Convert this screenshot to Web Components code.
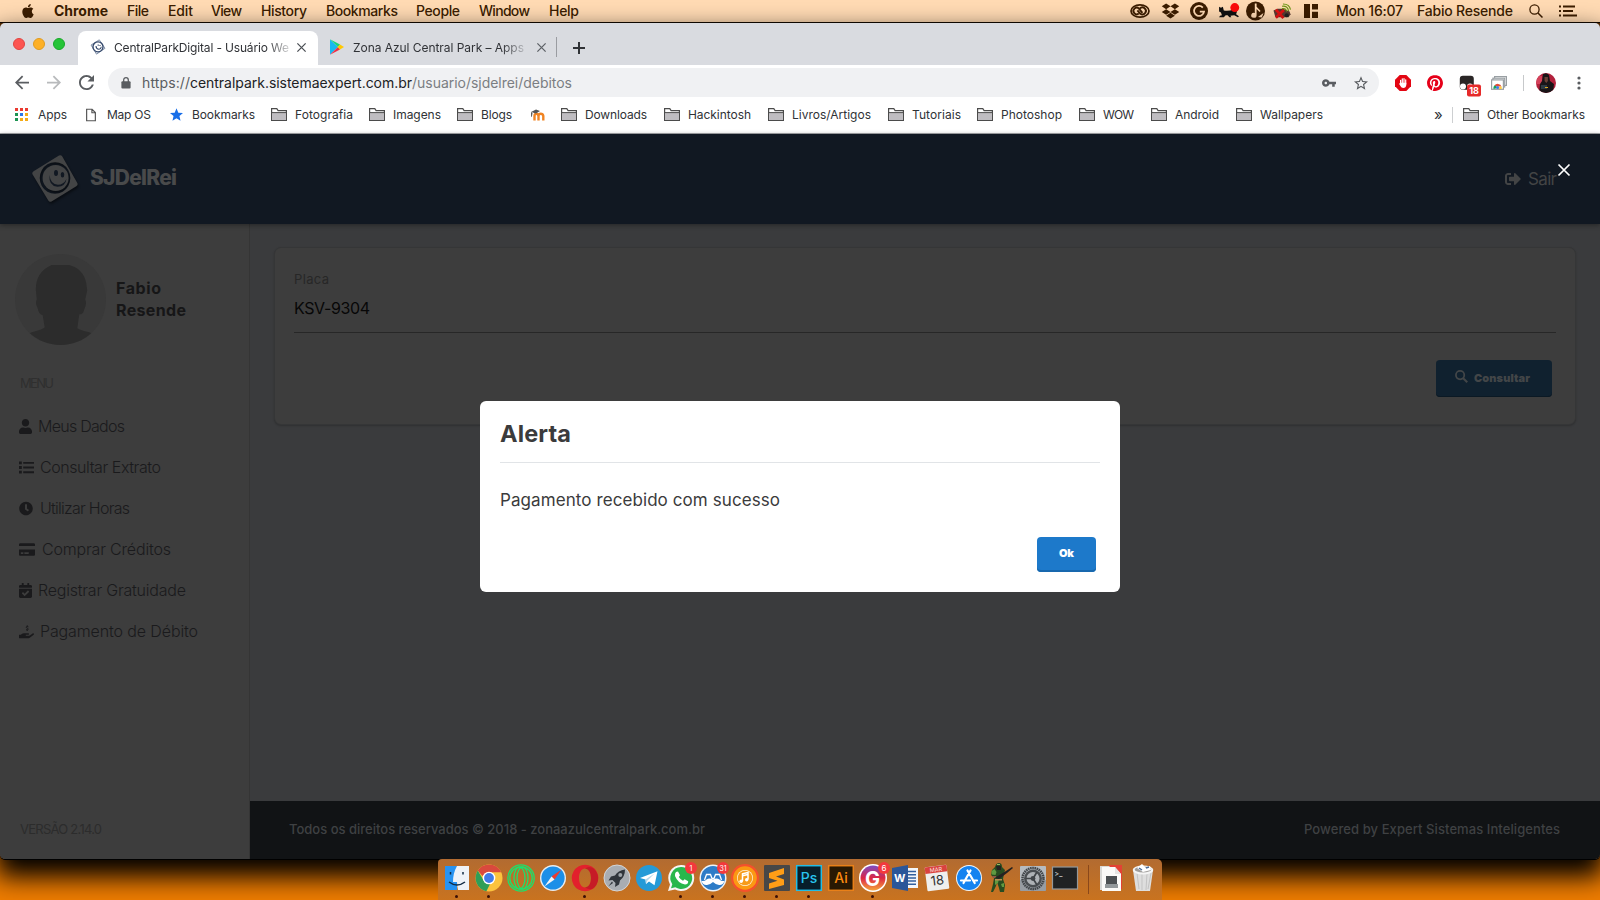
<!DOCTYPE html>
<html lang="pt-BR">
<head>
<meta charset="utf-8">
<title>CentralParkDigital - Usuário Web</title>
<style>
html,body{margin:0;height:100%;overflow:hidden}
body{font-family:Inter,"Liberation Sans",sans-serif;background:#e87800}
</style>
</head>
<body>
<mac-desktop></mac-desktop>
<script>
const ICONS = {
  apple:['0 0 24 24','<path d="M12.152 6.896c-.948 0-2.415-1.078-3.96-1.04-2.04.027-3.91 1.183-4.961 3.014-2.117 3.675-.546 9.103 1.519 12.09 1.013 1.454 2.208 3.09 3.792 3.039 1.52-.065 2.09-.987 3.935-.987 1.831 0 2.35.987 3.96.948 1.637-.026 2.676-1.48 3.676-2.948 1.156-1.688 1.636-3.325 1.662-3.415-.039-.013-3.182-1.221-3.22-4.857-.026-3.04 2.48-4.494 2.597-4.559-1.429-2.09-3.623-2.324-4.39-2.376-2-.156-3.675 1.09-4.61 1.09zM15.53 3.83c.843-1.012 1.4-2.427 1.245-3.83-1.207.052-2.662.805-3.532 1.818-.78.896-1.454 2.338-1.273 3.714 1.338.104 2.715-.688 3.559-1.701"/>'],
  cc:['0 0 20 14','<g fill="none" stroke="currentColor"><ellipse cx="10" cy="7" rx="9" ry="6.200" stroke-width="1.700"/><path d="M8.800 9.600A3.300 3.300 0 1 1 9 4.600l3.400 4.200" stroke-width="1.900"/><path d="M7.400 6.400l3 3.400a3.500 3.500 0 1 0-.6-5.300" stroke-width="1.900"/></g>'],
  dropbox:['0 1 24 22','<path d="M6 1.807L0 5.629l6 3.822 6.001-3.822L6 1.807zM18 1.807l-6 3.822 6 3.822 6-3.822-6-3.822zM0 13.274l6 3.822 6.001-3.822L6 9.452l-6 3.822zM18 9.452l-6 3.822 6 3.822 6-3.822-6-3.822zM6 18.371l6.001 3.822 6-3.822-6-3.822L6 18.371z"/>'],
  gcircle:['0 0 18 18','<circle cx="9" cy="9" r="9"/><path d="M12.800 5.600A5 5 0 1 0 14 9.600H9.800" fill="none" stroke="#ffdab3" stroke-width="1.800"/>'],
  cat:['0 0 23 18','<path fill="#111" d="M1 4l2 1 2-1 1 4q5 1 10-1l4 2-1 3 3 2-1 1-4-2-4 .5 1 1.500h-2l-2-2H8l-2 2H1l1-1.500 2-.5-1-3-2-1z"/><circle cx="17.600" cy="4.800" r="4.700" fill="#fb0a0a"/>'],
  music:['0 0 19 20','<circle cx="9.500" cy="10" r="9.500"/><path fill="#ffdab3" d="M8.800 2.500h1.800v3.200l4 4.300-1.100 1-2.900-3v6.300a2.700 2.500 0 1 1-1.800-2.300zM12 16l5.500-4-1.700 4.500z"/>'],
  car:['0 0 20 18','<path d="M1 8l4-2h6l7 3 1 3-2 3H3z" fill="#5b3b32"/><circle cx="15" cy="13" r="2.200" fill="#222"/><path d="M10 6q4-1 5 3M10 3.500q6-1 7 5M11 1q7 0 8 6" stroke="#6a9612" stroke-width="1.200" fill="none"/><path d="M3.500 7l8 9M12 7.500l-8.500 8" stroke="#e21313" stroke-width="3"/>'],
  panes:['0 0 14 14','<path d="M0 0h6v14H0zM8 0h6v5.500H8zM8 7.700h6V14H8z"/>'],
  search:['0 0 14 14','<circle cx="5.500" cy="5.500" r="4.600" fill="none" stroke="currentColor" stroke-width="1.300"/><path d="M9 9l4.500 4.500" stroke="currentColor" stroke-width="1.500"/>'],
  menulist:['0 0 18 12','<path d="M0 .5h2v2H0zM0 5h2v2H0zM0 9.500h2v2H0zM4 .5h12v2H4zM4 5h10v2H4zM4 9.500h14v2H4z"/>'],
  favicon:['0 0 16 16','<path d="M9.300.8L15 9.300 6.500 15.200 1 6z" fill="#dfe4ec" stroke="#6f7f99" stroke-width=".8"/><circle cx="8" cy="7.800" r="5" fill="#fff" stroke="#34486b" stroke-width="1.300"/><path d="M6 7q.3 3.500 3 3.300 2-.3 2.300-2.600M8.200 5.500v1.300M10 6v1" fill="none" stroke="#34486b" stroke-width="1.100"/>'],
  logo:['0 0 46 47','<path fill-rule="evenodd" d="M27 .5q2-1 3.300 1L45.300 28q1 2-1 3.200L19.500 46.500q-2 1-3.200-1L.6 19.500q-1-2 1-3.200zM23 7.200a15.300 15.800 0 1 0 .1 0z"/><circle cx="23.600" cy="23" r="13"/><g class="cut"><ellipse cx="24" cy="18" rx="2" ry="3"/><ellipse cx="30.500" cy="19.700" rx="1.800" ry="2.700"/><path d="M17.500 20q1 9.500 8.500 9.800 5.500 0 8.500-5.800-1 7.500-9 7.800Q16.500 31 17.500 20z"/></g>'],
  x:['0 0 12 12','<path d="M.5.500l11 11M11.500.500l-11 11" stroke="currentColor" stroke-width="1.700" fill="none"/>'],
  plus:['0 0 12 12','<path d="M6 0v12M0 6h12" stroke="currentColor" stroke-width="2"/>'],
  play:['0 0 14 16','<path d="M0 .5v15L8 8z" fill="#18b9ef"/><path d="M0 .3l10 5.200L8 8z" fill="#18d47d"/><path d="M0 15.700l10-5.200L8 8z" fill="#ef3047"/><path d="M10 5.400l4 2.600-4 2.600L7.500 8z" fill="#ffc800"/>'],
  back:['4 4 16 16','<path d="M20 11H7.830l5.590-5.590L12 4l-8 8 8 8 1.410-1.410L7.830 13H20v-2z"/>'],
  fwd:['4 4 16 16','<path d="M12 4l-1.410 1.410L16.170 11H4v2h12.170l-5.580 5.590L12 20l8-8z"/>'],
  reload:['4 4 16 16','<path d="M17.650 6.350C16.200 4.900 14.210 4 12 4c-4.420 0-7.990 3.580-7.990 8s3.570 8 7.990 8c3.730 0 6.840-2.550 7.730-6h-2.080c-.82 2.330-3.040 4-5.650 4-3.310 0-6-2.690-6-6s2.690-6 6-6c1.660 0 3.140.69 4.220 1.780L13 11h7V4l-2.350 2.350z"/>'],
  lock:['0 0 10 13','<rect y="4.500" width="10" height="8" rx="1.200"/><path d="M2.500 6V3.200a2.500 2.500 0 0 1 5 0V6" fill="none" stroke="currentColor" stroke-width="1.400"/>'],
  key:['1 6 22 12','<path d="M12.650 10C11.830 7.670 9.610 6 7 6c-3.310 0-6 2.690-6 6s2.690 6 6 6c2.610 0 4.830-1.670 5.650-4H17v4h4v-4h2v-4H12.650zM7 14c-1.100 0-2-.9-2-2s.9-2 2-2 2 .9 2 2-.9 2-2 2z"/>'],
  staro:['2 2 20 19','<path d="M22 9.240l-7.190-.62L12 2 9.190 8.630 2 9.240l5.460 4.730L5.820 21 12 17.270 18.180 21l-1.630-7.030L22 9.240zM12 15.400l-3.760 2.270 1-4.280-3.320-2.880 4.380-.38L12 6.100l1.710 4.040 4.380.38-3.320 2.880 1 4.280L12 15.400z"/>'],
  star:['2 2 20 19','<path fill="#1a6fe8" d="M12 17.270L18.180 21l-1.640-7.030L22 9.240l-7.190-.61L12 2 9.190 8.630 2 9.240l5.460 4.730L5.820 21z"/>'],
  stop:['0 0 16 16','<path fill="#e30613" d="M4.700 0h6.600L16 4.700v6.600L11.300 16H4.700L0 11.300V4.700z"/><path d="M5.600 9V5.300M7.300 8V3.800M9 8V3.600M10.700 9V4.800" stroke="#fff" stroke-width="1.200" stroke-linecap="round"/><path fill="#fff" d="M5 7.800h6.300V10q-.3 3-3 3-2 0-2.700-1.800L4 8.800q.4-.8 1-.2z"/>'],
  pin:['0 0 24 24','<circle cx="12" cy="12" r="11" fill="#fff"/><path fill="#e60019" d="M12.017 0C5.396 0 .029 5.367.029 11.987c0 5.079 3.158 9.417 7.618 11.162-.105-.949-.199-2.403.041-3.439.219-.937 1.406-5.957 1.406-5.957s-.359-.72-.359-1.781c0-1.663.967-2.911 2.168-2.911 1.024 0 1.518.769 1.518 1.688 0 1.029-.653 2.567-.992 3.992-.285 1.193.6 2.165 1.775 2.165 2.128 0 3.768-2.245 3.768-5.487 0-2.861-2.063-4.869-5.008-4.869-3.410 0-5.409 2.562-5.409 5.199 0 1.033.394 2.143.889 2.741.099.12.112.225.085.345-.09.375-.293 1.199-.334 1.363-.053.225-.172.271-.401.165-1.495-.69-2.433-2.878-2.433-4.646 0-3.776 2.748-7.252 7.920-7.252 4.158 0 7.392 2.967 7.392 6.923 0 4.135-2.607 7.462-6.233 7.462-1.214 0-2.354-.629-2.758-1.379l-.749 2.848c-.269 1.045-1.004 2.352-1.498 3.146 1.123.345 2.306.535 3.550.535 6.607 0 11.985-5.365 11.985-11.987C23.970 5.390 18.592.026 11.985.026z"/>'],
  tamper:['0 0 22 22','<rect x=".8" y=".8" width="14" height="14" rx="3" fill="#2a2626"/><circle cx="4" cy="11.500" r="3" fill="#fff"/><circle cx="11" cy="11.500" r="3" fill="#fff"/><rect x="8" y="9.600" width="14" height="12" rx="2" fill="#e62a2a"/><text x="15" y="19" font-size="9" font-weight="700" fill="#fff" text-anchor="middle">18</text>'],
  shots:['0 0 16 14','<g fill="#fff" stroke="#999fa3" stroke-width="1.200"><rect x="3.600" y=".6" width="11.800" height="8.800"/><rect x="1.900" y="2.200" width="11.800" height="8.800"/><rect x=".6" y="3.900" width="11.800" height="9.400"/></g><path d="M2.500 13a4 4 0 0 1 2-4.300L6.500 12z" fill="#17a05d"/><path d="M3.500 9.500a4 4 0 0 1 7 1H6.500z" fill="#e34b37"/><path d="M9 10.500h1.700V13H7z" fill="#ffcd40"/><circle cx="6.600" cy="11.600" r="1.500" fill="#3d7cf0"/>'],
  face:['0 0 20 20','<defs><clipPath id="f"><circle cx="10" cy="10" r="10"/></clipPath></defs><g clip-path="url(#f)"><path fill="#b2213c" d="M0 0h20v20H0z"/><path fill="#d4415a" d="M0 3h6v8H0z"/><path fill="#191417" d="M7 1q4-2 6 1l1 6 4 3-1 9H3l1-9 2-3z"/><path fill="#6b4137" d="M8.500 4h3.400v4l-1.600 2-1.700-2z"/><path fill="#2c3942" d="M5 12h6v4H5z"/><path fill="#d9a722" d="M9 14h3v1H9z"/></g>'],
  dots:['0 0 4 14','<circle cx="2" cy="2" r="1.600"/><circle cx="2" cy="7" r="1.600"/><circle cx="2" cy="12" r="1.600"/>'],
  apps:['0 0 13 13','<g fill="#ea3a30"><path d="M0 0h3v3H0zM5 0h3v3H5zM10 0h3v3h-3z"/></g><path fill="#1d9453" d="M0 5h3v3H0zM0 10h3v3H0z"/><path fill="#2a77e8" d="M5 5h3v3H5z"/><path fill="#f4ab16" d="M10 5h3v3h-3zM10 10h3v3h-3zM5 10h3v3H5z"/>'],
  doc:['0 0 11 14','<path d="M.7.7h6l3.600 3.600v9H.7zM6.500.7v3.800h3.800" fill="#fff" stroke="#555" stroke-width="1.300"/>'],
  folder:['0 0 16 13','<path d="M.6 12.300V.7h5.200l1.300 2h8.300v9.600z" fill="#fff" stroke="#4b4b4b" stroke-width="1.200"/><path d="M1 5h14v7H1z" fill="#bfbdc1"/><path d="M1 4.600h14" stroke="#4b4b4b"/>'],
  moodle:['0 0 15 12','<path d="M4.500 11.500V7q0-2.200 1.800-2.200T8.500 7v4.500M8.500 7q0-2.200 2.200-2.200T13.300 7v4.500" fill="none" stroke="#f08423" stroke-width="2.400"/><path fill="#555" d="M1 3l5-2.500L10 2 6 4.500zM1 3l1.500 1.200-.7 4-.7-1z"/>'],
  user:['0 0 448 512','<path d="M224 256c70.700 0 128-57.300 128-128S294.700 0 224 0 96 57.300 96 128s57.300 128 128 128zm89.600 32h-16.700c-22.200 10.200-46.900 16-72.900 16s-50.600-5.800-72.900-16h-16.700C60.200 288 0 348.200 0 422.400V464c0 26.500 21.500 48 48 48h352c26.500 0 48-21.500 48-48v-41.600c0-74.200-60.200-134.400-134.400-134.400z"/>'],
  list:['0 0 16 14','<path d="M0 .5h3v3H0zM0 5.500h3v3H0zM0 10.500h3v3H0zM4.500 1h11.500v2H4.500zM4.500 6h11.500v2H4.500zM4.500 11h11.500v2H4.500z"/>'],
  clock:['0 0 512 512','<path d="M256 8C119 8 8 119 8 256s111 248 248 248 248-111 248-248S393 8 256 8zm57.100 350.100L224.900 294c-3.100-2.300-4.900-5.900-4.900-9.700V116c0-6.600 5.400-12 12-12h48c6.600 0 12 5.400 12 12v137.700l63.500 46.200c5.400 3.900 6.500 11.400 2.600 16.800l-28.200 38.800c-3.900 5.300-11.400 6.500-16.800 2.600z"/>'],
  card:['0 0 576 512','<path d="M0 432c0 26.500 21.500 48 48 48h480c26.500 0 48-21.500 48-48V256H0v176zm192-68c0-6.600 5.400-12 12-12h136c6.600 0 12 5.400 12 12v40c0 6.600-5.400 12-12 12H204c-6.600 0-12-5.400-12-12v-40zm-128 0c0-6.600 5.400-12 12-12h72c6.600 0 12 5.400 12 12v40c0 6.600-5.400 12-12 12H76c-6.600 0-12-5.400-12-12v-40zM576 80v48H0V80c0-26.500 21.500-48 48-48h480c26.500 0 48 21.500 48 48z"/>'],
  cal:['0 0 448 512','<path d="M436 160H12c-6.627 0-12-5.373-12-12v-36c0-26.510 21.490-48 48-48h48V12c0-6.627 5.373-12 12-12h40c6.627 0 12 5.373 12 12v52h128V12c0-6.627 5.373-12 12-12h40c6.627 0 12 5.373 12 12v52h48c26.510 0 48 21.490 48 48v36c0 6.627-5.373 12-12 12zM12 192h424c6.627 0 12 5.373 12 12v260c0 26.510-21.490 48-48 48H48c-26.510 0-48-21.490-48-48V204c0-6.627 5.373-12 12-12zm333.296 95.947l-28.169-28.398c-4.667-4.705-12.265-4.736-16.970-.068L194.120 364.665l-45.980-46.352c-4.667-4.705-12.266-4.736-16.971-.068l-28.397 28.170c-4.705 4.667-4.736 12.265-.068 16.970l82.601 83.269c4.667 4.705 12.265 4.736 16.970.068l142.953-141.805c4.705-4.667 4.736-12.265.068-16.970z"/>'],
  hand:['0 0 576 512','<path d="M565.300 328.100c-11.800-10.700-30.200-10-42.600 0L430.300 402c-11.300 9.100-25.400 14-40 14H272c-8.800 0-16-7.200-16-16s7.200-16 16-16h78.300c15.900 0 30.700-10.900 33.300-26.600 3.300-20-12.100-37.400-31.600-37.400H192c-27 0-53.100 9.300-74.100 26.300L71.400 384H16c-8.800 0-16 7.200-16 16v96c0 8.800 7.200 16 16 16h356.800c14.500 0 28.600-4.900 40-14L564 377c15.200-12.100 16.400-35.300 1.300-48.900z"/><path d="M362 75q-25-18-55-13t-28 35q0 22 38 30t40 34q0 30-30 33t-58-16M316 20v45m0 125v45" fill="none" stroke="currentColor" stroke-width="38"/>'],
  out:['0 0 512 512','<path d="M497 273L329 441c-15 15-41 4.500-41-17v-96H152c-13.300 0-24-10.700-24-24v-96c0-13.300 10.700-24 24-24h136V88c0-21.400 25.900-32 41-17l168 168c9.300 9.400 9.300 24.600 0 34zM192 436v-40c0-6.600-5.400-12-12-12H96c-17.700 0-32-14.300-32-32V160c0-17.700 14.300-32 32-32h84c6.600 0 12-5.400 12-12V76c0-6.600-5.400-12-12-12H96c-53 0-96 43-96 96v192c0 53 43 96 96 96h84c6.600 0 12-5.400 12-12z"/>'],
  mag:['0 0 14 14','<circle cx="5.500" cy="5.500" r="4.500" fill="none" stroke="currentColor" stroke-width="1.900"/><path d="M8.800 8.800l4.400 4.400" stroke="currentColor" stroke-width="2.200"/>'],
  person:['0 0 92 92','<defs><clipPath id="p"><circle cx="46" cy="46" r="46"/></clipPath></defs><g clip-path="url(#p)"><path fill="#393939" d="M0 0h92v92H0z"/><path fill="#2c2c2c" d="M37 11h18q14 4 17 18l1 8-2 9q2 4-1 10-1 5-5 5l-2 14q3 2 12 4l12 5v10H5V84l12-5q12-3 13-5l-2-12q-4-1-5-7-3-5-1-9l-1-10q0-18 16-25z"/></g>'],
  finder:['0 0 28 28','<path fill="#2793f2" d="M2 2h12v24H2z"/><path fill="#eef2f8" d="M14 2h12v24H15q-1-4-1-8h-4q0-9 4-16z"/><path d="M7.500 8v2.500M20 8v2.500M6 18q8 6 16 0" stroke="#132b43" stroke-width="1.500" fill="none"/>'],
  chrome:['0 0 28 28','<circle cx="14" cy="14" r="13.500" fill="#fbc33d"/><path fill="#d9493d" d="M14 .5A13.500 13.500 0 0 1 26.200 8.300H14L7.500 12 2.700 6.600A13.500 13.500 0 0 1 14 .5z"/><path fill="#2f9e58" d="M2.700 6.600L9 17l6 3-3.600 7.200A13.500 13.500 0 0 1 2.700 6.600z"/><circle cx="14" cy="14" r="6.300" fill="#fff"/><circle cx="14" cy="14" r="4.900" fill="#3f7be9"/>'],
  rings:['0 0 28 28','<g fill="none" stroke="#1ee06b" stroke-width="1.300"><circle cx="14" cy="14" r="13.200"/><circle cx="14" cy="14" r="11.200"/><ellipse cx="12.500" cy="14" rx="5.500" ry="11"/><ellipse cx="15.500" cy="14" rx="5.500" ry="11"/></g>'],
  safari:['0 0 28 28','<circle cx="14" cy="14" r="13" fill="#e8edf1"/><circle cx="14" cy="14" r="11.600" fill="#1c8fe8"/><path d="M22.500 5.500L12.500 12.500l3 3z" fill="#ee3b30"/><path d="M5.500 22.500l7-10 3 3z" fill="#f3f4f5"/>'],
  opera:['0 0 28 28','<path fill="#e2202c" fill-rule="evenodd" d="M14 .7a13.300 13.300 0 1 0 .1 0zM14 4.500c3.500 0 6 4 6 9.500s-2.500 9.500-6 9.500S8 19.500 8 14s2.500-9.500 6-9.500z"/><path fill="#9e151d" d="M14 23.500q6-1 6-9.500T14 4.500q4-3 8.500 0Q28 9 27 17q-4 12-13 6.500z" opacity=".4"/>'],
  rocket:['0 0 28 28','<circle cx="14" cy="14" r="13" fill="#a9adb2"/><circle cx="14" cy="14" r="13" fill="none" stroke="#d4d6d8"/><path fill="#30353b" d="M22 5.500q-7 1-10 6l-4 1-2.500 4 4-.5 3 3-.5 4 4-2.500 1-4q5-4 5-11zM9 17.500l-3.500 4.800L10 19z"/><circle cx="17.300" cy="11" r="2" fill="#9da3a8"/>'],
  telegram:['0 0 28 28','<circle cx="14" cy="14" r="13" fill="#259ad7"/><path fill="#fff" d="M5 14l17.500-6.800-3 14-5.500-3.800-3 2.600-.5-4.600z"/><path d="M10.500 15.400l9-6-7 7.200-1.500 3.400z" fill="#b6d6e9"/>'],
  whatsapp:['0 0 28 28','<path fill="#f5f5f5" d="M14 1a13 13 0 1 1-6 24.400L1 27l2-6.500A13 13 0 0 1 14 1z"/><path fill="#28b74c" d="M14 3a11 11 0 1 1-5.700 20.300L4 24.300l1.300-4.100A11 11 0 0 1 14 3z"/><path fill="#fff" d="M9 8l2-.5 2 3.700-1.200 1.800q1.500 2.500 4.200 3.800l1.600-1.600 3.600 2q0 3.300-3.200 3.300Q11 19.500 8 12q-.4-2.500 1-4z"/><circle cx="24" cy="4" r="6" fill="#f3393c"/><text x="24" y="6.600" font-size="7" fill="#fff" text-anchor="middle">1</text>'],
  franz:['0 0 28 28','<circle cx="14" cy="14" r="13.500" fill="#eef3f7"/><circle cx="14" cy="14" r="12" fill="#2e7cc7"/><path d="M5.500 16l2-5.500h4l1.500 4h2l1.500-4h4l2 5.500" fill="none" stroke="#fff" stroke-width="1.300"/><path fill="#fff" d="M2.500 17q3.500.5 5-1.500 3-2 6.500 0 3.500-2 6.500 0 1.500 2 5 1.500-1.500 4.500-5.500 4-3.500-.5-6-3-2.500 2.500-6 3-4 .5-5.500-4z"/><circle cx="24" cy="4" r="6" fill="#f3393c"/><text x="24" y="6.600" font-size="7" fill="#fff" text-anchor="middle">31</text>'],
  gmusic:['0 0 28 28','<circle cx="14" cy="14" r="14" fill="#f4512c"/><circle cx="14" cy="14" r="11.800" fill="#fb9913"/><circle cx="14" cy="14" r="8" fill="#fff5df"/><circle cx="14" cy="14" r="7.300" fill="#f79b1a"/><path d="M11.500 17V9.800l5.500-1.300v7M11.500 11.700l5.500-1.300" stroke="#fff" stroke-width="1.500" fill="none"/><circle cx="10.200" cy="17.300" r="1.700" fill="#fff"/><circle cx="15.700" cy="15.800" r="1.700" fill="#fff"/>'],
  sublime:['0 0 28 28','<rect x="1" y="1" width="26" height="26" rx="1" fill="#474747"/><path fill="#ff9d16" d="M6 9l15-5v6l-8 2.600 8 3v5.400L6 25v-5.500l8.500-2.700L6 14z"/>'],
  ps:['0 0 28 28','<rect x="1.700" y="1.700" width="24.600" height="24.600" fill="#071e2a" stroke="#21bde5" stroke-width="1.500"/><text x="14" y="18.500" font-size="14" font-weight="500" fill="#29c4ef" text-anchor="middle">Ps</text>'],
  ai:['0 0 28 28','<rect x="1.700" y="1.700" width="24.600" height="24.600" fill="#291903" stroke="#e98018" stroke-width="1.500"/><text x="14" y="18.500" font-size="14" font-weight="500" fill="#f98910" text-anchor="middle">Ai</text>'],
  gram:['0 0 28 28','<defs><linearGradient id="g" x2="0" y2="1"><stop stop-color="#7c4cc3"/><stop offset=".5" stop-color="#dc2743"/><stop offset="1" stop-color="#f5a33b"/></linearGradient></defs><circle cx="14" cy="14" r="14" fill="#fff"/><circle cx="14" cy="14" r="12.500" fill="url(#g)"/><text x="13.500" y="21.500" font-size="20" font-weight="700" fill="#fff" text-anchor="middle">G</text><circle cx="25" cy="4" r="6" fill="#f3393c"/><text x="25" y="6.800" font-size="8" fill="#fff" text-anchor="middle">6</text>'],
  word:['0 0 28 28','<path fill="#f3f6fa" d="M14 4h13v20H14z"/><path d="M16 7.500h9M16 10.700h9M16 13.900h9M16 17.100h9M16 20.300h9" stroke="#32609e" stroke-width="1.500"/><path fill="#2a5699" d="M1 4l16-3v26L1 24z"/><text x="8.700" y="18" font-size="11" font-weight="700" fill="#fff" text-anchor="middle">W</text>'],
  caldock:['0 0 28 28','<g transform="rotate(-7 14 14)"><rect x="3" y="2" width="22" height="24" rx="1" fill="#efefed"/><path fill="#d9433e" d="M3 2h22v6.500H3z"/><text x="14" y="7.500" font-size="5.500" fill="#ffe6e3" text-anchor="middle">MAR</text><text x="14" y="21" font-size="13" fill="#333" text-anchor="middle">18</text></g>'],
  appstore:['0 0 28 28','<circle cx="14" cy="14" r="13" fill="#eef6fd"/><circle cx="14" cy="14" r="12" fill="#1583f0"/><path d="M15.500 6.500L8.500 19M12.500 6.500L19.700 19M6 16.500h9M18 16.500h4" stroke="#fff" stroke-width="2.200" stroke-linecap="round"/>'],
  doom:['0 0 28 28','<g transform="translate(0 -1)"><path fill="#264c20" d="M8 4q1-4 4-4t3 4l3 3-1 4-1 5 2 6-1 7h-4l-1-4-2-6-1 4-3 6H4l2-8 1-6-3-3 1-5z"/><path fill="#609a41" d="M4.500 8l3-2 2 3-1 3-4-.5zM8 17l4-1-1 4-3 2zM14 21l3-1v4h-2z"/><path fill="#8d5c45" d="M5 13h4l1 2H6z"/><path fill="#242222" d="M9 14l10-6 6-4 1 1-6 5-8 6-4-1zM9 3h5v4h-4z"/><path fill="#b78b53" d="M8 16h7v1.500H8z"/><path fill="#98b56a" d="M10 1h3v1h-3z"/></g>'],
  gear:['0 0 28 28','<rect x="1" y="2" width="26" height="25" rx="1" fill="#b6bbc0"/><path fill="#777d83" d="M1 16h26v11H1z" opacity=".5"/><circle cx="14" cy="14.500" r="10.500" fill="none" stroke="#414549" stroke-width="2.500" stroke-dasharray="1.600 .6"/><circle cx="14" cy="14.500" r="9" fill="#4a4e52"/><circle cx="14" cy="14.500" r="6.500" fill="#aeb2b6"/><path d="M14 14.500H6.500M14 14.500l4-6.500M14 14.500l4 6.500" stroke="#404448" stroke-width="1.700"/><circle cx="14" cy="14.500" r="2.400" fill="#404448"/>'],
  term:['0 0 28 28','<rect x="1.500" y="3" width="25" height="22" fill="#202223" stroke="#949899" stroke-width="1.200"/><text x="3.500" y="11.500" font-size="7" fill="#f2f2f2">&gt;_</text>'],
  paper:['0 0 28 28','<path fill="#d9dad8" d="M3 2h15v24H3z"/><path fill="#e34235" d="M12 1h13v24h-4z"/><path fill="#fafaf8" d="M5 3h13l6 7v17H5z"/><path fill="#4b5052" d="M9 12h11v8H9z"/><path fill="#92989a" d="M8 20h13v4H8z"/><path fill="#e4e4e2" d="M18 3l6 7h-6z"/>'],
  trash:['0 0 28 28','<path fill="#dedede" d="M4 6h20l-3 21H7z"/><path d="M8 9l2 16M13 9v17M18 9l-1 17M22 9l-3 16" stroke="#c3c3c3"/><ellipse cx="14" cy="6" rx="10.300" ry="4.500" fill="#f4f4f4"/><ellipse cx="14" cy="5.500" rx="8.300" ry="3" fill="#a09e9c"/><path fill="#fff" d="M8 4l5-4 4 4 4-2 1 4-8 2z"/><path d="M10 4l3 2M17 4l3-1" stroke="#4a6b99" stroke-width="1.500"/>']
};

class Base extends HTMLElement {
  constructor(){ super(); this.attachShadow({mode:'open'}); }
  connectedCallback(){ if(!this.shadowRoot.firstChild) this.shadowRoot.innerHTML = this.view(); }
}
const def = (n, view) => customElements.define(n, class extends Base { view(){ return view.call(this); } });

/* Small builders: an icon, a label of a given width, and a row whose items start at given offsets. */
const ic = (n,w,h,c='') => `<ui-icon name="${n}" style="width:${w}px;height:${h}px;${c?'color:'+c:''}"></ui-icon>`;
const tx = (t,w,s='') => `<ui-label w="${w}" style="${s}">${t}</ui-label>`;
const row = (items) => { let at=0; return items.map(([x,w,h]) => { const m=x-at; at=x+w; return `<span class="it" style="margin-left:${m}px;width:${w}px">${h}</span>`; }).join(''); };
const ROW = '.it{flex:none;display:flex;align-items:center;white-space:nowrap}';

def('mac-menubar', () => `<style>:host{display:flex;align-items:center;height:22px;box-sizing:content-box;background:#ffdab3;color:#3c1d00;font-size:14px;font-weight:500;border-bottom:1px solid #130900}ui-label{margin-top:-1px}${ROW}</style>` + row([
  [21,14,ic('apple',14,16)],[54,54,tx('Chrome',54,'font-weight:700')],[127,22,tx('File',22)],[168,25,tx('Edit',25)],[211,31,tx('View',31)],[261,46,tx('History',46)],[326,72,tx('Bookmarks',72)],[416,44,tx('People',44)],[479,51,tx('Window',51)],[549,30,tx('Help',30)],
  [1130,20,ic('cc',20,14)],[1161,19,ic('dropbox',19,16)],[1190,18,ic('gcircle',18,18)],[1218,22,ic('cat',22,17)],[1246,19,ic('music',19,20)],[1272,20,ic('car',20,17)],[1304,14,ic('panes',14,14)],
  [1336,67,tx('Mon 16:07',67)],[1417,96,tx('Fabio Resende',96)],[1529,14,ic('search',14,14)],[1559,18,ic('menulist',18,12)]]));

def('browser-tabs', () => `<style>:host{display:flex;height:42px;background:#d9dbe0;box-sizing:border-box;padding-top:8px;font-size:12px;color:#303236}
.lights{display:flex;gap:8px;padding:7px 0 0 13px;width:65px}.lights i{width:12px;height:12px;border-radius:6px;box-sizing:border-box}
.tab{display:flex;height:34px;box-sizing:border-box;padding-bottom:2px;align-items:center}.a{width:240px;background:#fff;border-radius:8px 8px 0 0}.b{width:238px}
.lights i:nth-child(1){background:#fc5551;border:1px solid #e24440}.lights i:nth-child(2){background:#fdb027;border:1px solid #e09b20}.lights i:nth-child(3){background:#26c438;border:1px solid #18a929}
.fade{-webkit-mask:linear-gradient(90deg,#000 calc(100% - 22px),#0003)}${ROW}
.n{display:flex;height:32px;align-items:center}.n i{width:1px;height:20px;background:#9a9ca1}</style>
<div class="lights"><i></i><i></i><i></i></div>
<div class="tab a">${row([[12,16,ic('favicon',16,16)],[36,175,`<span class="fade">${tx('CentralParkDigital - Usuário We',175)}</span>`],[219,10,ic('x',9,9,'#4d5156')]])}</div>
<div class="tab b">${row([[12,14,ic('play',14,16)],[35,171,`<span class="fade">${tx('Zona Azul Central Park – Apps',171)}</span>`],[219,9,ic('x',9,9,'#5f6368')]])}</div>
<div class="n"><i></i><span style="margin-left:16px;margin-top:2px">${ic('plus',12,12,'#303236')}</span></div>`);

def('browser-toolbar', () => `<style>:host{display:flex;align-items:center;height:35px;background:#fff;color:#5a5d61;font-size:14px}
${ROW}.omni{display:flex;align-items:center;width:1271px;height:29px;margin-left:14px;border-radius:15px;background:#f0f1f3;flex:none}.rule{width:1px;height:16px;background:#c7c9cb}</style>
${row([[15,14,ic('back',14,15)],[47,14,ic('fwd',14,15,'#b8babc')],[79,15,ic('reload',15,15)]])}
<div class="omni">${row([[13,10,ic('lock',10,12)],[34,48,tx('https://',48)],[82,222,tx('centralpark.sistemaexpert.com.br',222,'color:#202124')],[304,160,tx('/usuario/sjdelrei/debitos',160,'color:#7b7e82')],[1214,14,ic('key',14,8)],[1246,14,ic('staro',14,14)]])}</div>
${row([[16,16,ic('stop',16,16)],[48,16,ic('pin',16,16)],[80,22,`<span style="display:flex;margin-top:6px">${ic('tamper',22,22)}</span>`],[112,16,ic('shots',16,14)],[144,1,'<i class="rule"></i>'],[157,20,ic('face',20,20)],[198,4,ic('dots',4,14)]])}`);

def('bookmark-bar', () => { const f=(x,w,t)=>[[x,16,ic('folder',16,13)],[x+24,w,tx(t,w)]];
 return `<style>:host{display:flex;align-items:center;height:34px;padding-bottom:4px;box-sizing:border-box;background:#fff;border-bottom:1px solid #a7a9ac;color:#2f3236;font-size:12px}${ROW}.rule{width:1px;height:16px;background:#cdcfd1}</style>` + row([
 [15,13,ic('apps',13,13)],[38,29,tx('Apps',29)],[86,11,ic('doc',10,14)],[107,44,tx('Map OS',44)],[170,12,ic('star',13,13)],[192,63,tx('Bookmarks',63)],
 ...f(271,58,'Fotografia'),...f(369,48,'Imagens'),...f(457,31,'Blogs'),[530,15,ic('moodle',15,12)],...f(561,62,'Downloads'),...f(664,63,'Hackintosh'),...f(768,79,'Livros/Artigos'),...f(888,49,'Tutoriais'),...f(977,61,'Photoshop'),...f(1079,31,'WOW'),...f(1151,44,'Android'),...f(1236,63,'Wallpapers'),
 [1434,8,tx('»',8,'font-size:15px')],[1452,1,'<i class="rule"></i>'],...f(1463,98,'Other Bookmarks')]); });

def('app-header', () => `<style>:host{display:flex;justify-content:space-between;align-items:center;height:90px;background:#111822;color:#434445;box-sizing:border-box;padding:0 43px 2px 32px;box-shadow:0 1px 5px #0006;position:relative;z-index:1}
.l,.r{display:flex;align-items:center}.l{gap:12px}.l>ui-label{margin-top:-2px}.r{gap:7px;padding-top:2px}.lg{filter:drop-shadow(1px 2px 1px #0007);display:flex}</style>
<div class="l"><span class="lg">${ic('logo',46,47)}</span>${tx('SJDelRei',87,'font-size:21px;font-weight:800;color:#494a4b')}</div>
<div class="r">${ic('out',16,16)}${tx('Sair',29,'font-size:17px')}</div>`);

def('side-menu', () => `<style>:host{display:flex;flex-direction:column;width:250px;box-sizing:border-box;background:#3d3d3d;color:#1a1a1c;border-right:1px solid #353535}
.u{display:flex;align-items:center;gap:10px;padding:30px 0 0 15px}.nm{display:grid;font-weight:700;font-size:16px;color:#161617;line-height:22px;margin-top:-2px}
.m{padding:28px 0 0 20px;height:20px;font-size:13px;color:#2f2f2f;display:flex;align-items:center}
nav{padding-top:13px}.row{display:flex;align-items:center;height:41px;padding-left:19px}.row>ui-label{margin-top:-1px}
.v{margin-top:auto;height:60px;padding-left:20px;display:flex;align-items:center;font-size:13px;color:#2c2c2c}</style>
<div class="u">${ic('person',91,91)}<div class="nm">${tx('Fabio',45)}${tx('Resende',70)}</div></div>
<div class="m">${tx('MENU',34)}</div>
<nav>${[['user',13,87,'Meus Dados',6],['list',15,121,'Consultar Extrato',6],['clock',14,90,'Utilizar Horas',7],['card',16,129,'Comprar Créditos',7],['cal',13,148,'Registrar Gratuidade',6],['hand',15,158,'Pagamento de Débito',6]].map(([i,w,tw,t,g])=>`<div class="row" style="gap:${g}px">${ic(i,w,15)}${tx(t,tw,'font-size:16px;font-weight:300')}</div>`).join('')}</nav>
<div class="v">${tx('VERSÃO 2.14.0',82)}</div>`);

def('plate-card', () => `<style>:host{display:flex;flex-direction:column;box-sizing:border-box;height:178px;padding:0 19px;background:#3d3d3d;border:1px solid #353637;border-radius:7px;box-shadow:0 1px 2px #0003}
.l{height:26px;margin-top:18px;display:flex;align-items:center;font-size:13px;color:#272727}.i{height:41px;box-sizing:border-box;padding-bottom:9px;border-bottom:1px solid #272727;display:flex;align-items:center;font-size:16px;color:#070707}
.b{align-self:flex-end;margin:27px 4px 0 0;width:116px;height:37px;box-sizing:border-box;background:#10212f;border-radius:4px;color:#434648;display:flex;align-items:center;gap:6px;padding:0 0 2px 19px;box-shadow:inset 0 -1px #0b1924}</style>
<div class="l">${tx('Placa',35)}</div><div class="i">${tx('KSV-9304',76)}</div>
<div class="b"><span style="margin-top:-2px;display:flex">${ic('mag',13,13)}</span>${tx('Consultar',56,'font-size:11px;font-weight:900')}</div>`);

def('app-footer', () => `<style>:host{display:flex;justify-content:space-between;align-items:center;height:58px;box-sizing:border-box;padding:0 40px 2px 39px;background:#111315;color:#3f4143;font-size:13px;font-weight:500}</style>${tx('Todos os direitos reservados © 2018 - zonaazulcentralpark.com.br',416)}${tx('Powered by Expert Sistemas Inteligentes',256)}`);

def('alert-dialog', () => `<style>:host{display:flex;flex-direction:column;position:absolute;left:480px;top:267px;width:640px;height:191px;box-sizing:border-box;padding:0 20px;background:#fff;border-radius:6px;color:#3b3b3c;z-index:3}
.h{height:62px;border-bottom:1px solid #e1e4e7;display:flex;align-items:center;box-sizing:border-box;padding-top:3px}.t{height:74px;display:flex;align-items:center;padding-bottom:1px;box-sizing:border-box}
.b{align-self:flex-end;margin-right:4px;width:59px;height:35px;background:#1d79ca;border-radius:4px;box-shadow:inset 0 -2px #1868ae;color:#fff;display:flex;align-items:center;justify-content:center;padding-bottom:3px;box-sizing:border-box}</style>
<div class="h">${tx('Alerta',71,'font-size:23.5px;font-weight:700')}</div><div class="t">${tx('Pagamento recebido com sucesso',280,'font-size:17px')}</div><div class="b">${tx('Ok',15,'font-size:11px;font-weight:900')}</div>`);

def('web-app', () => `<style>:host{display:flex;flex-direction:column;height:725px;position:relative;background:#3a3b3d}.w{display:flex;flex:1}.c{flex:1;display:flex;flex-direction:column}.m{flex:1;padding:23px 24px}.close{position:absolute;right:30px;top:30px;z-index:4;color:#fff;display:flex}</style>
<app-header></app-header><div class="w"><side-menu></side-menu><div class="c"><div class="m"><plate-card></plate-card></div><app-footer></app-footer></div></div>
<span class="close">${ic('x',12,12)}</span><alert-dialog></alert-dialog>`);

def('mac-dock', () => `<style>:host{display:flex;width:724px;height:41px;margin-left:438px;background:linear-gradient(#b26b31,#c9731f);border-radius:4px 5px 0 0;box-sizing:border-box;padding:5px 5px 0;position:relative}
.a{width:32px;display:flex;flex-direction:column;align-items:center;flex:none}.a i{width:3px;height:3px;border-radius:2px;margin:2.500px 1px 0 0;background:#3c0f05}.s{width:1px;height:29px;background:#8a481b;margin:1px 6px 0 7px;flex:none}</style>
${[['finder',1],['chrome',1],['rings'],['safari'],['opera',1],['rocket'],['telegram'],['whatsapp',1],['franz',1],['gmusic',1],['sublime',1],['ps',1],['ai'],['gram',1],['word'],['caldock'],['appstore'],['doom'],['gear'],['term'],0,['paper'],['trash']].map(d=>d?`<span class="a" style="margin-left:${d[0]=='finder'?-2:0}px">${ic(d[0],28,28)}${d[1]?'<i></i>':''}</span>`:'<span class="s"></span>').join('')}`);

def('mac-desktop', () => `<style>:host{display:flex;flex-direction:column;height:900px;width:1600px;overflow:hidden;background:linear-gradient(#5a2d00 0 40px,#ee7c00 860px)}.win{height:836px;border-radius:5px;overflow:hidden;flex:none}.sh{border-radius:5px;box-shadow:0 14px 26px 4px #000,0 1px 0 #000;flex:none}</style>
<mac-menubar></mac-menubar><div class="sh"><div class="win"><browser-tabs></browser-tabs><browser-toolbar></browser-toolbar><bookmark-bar></bookmark-bar><web-app></web-app></div></div><mac-dock></mac-dock>`);

customElements.define('ui-icon', class extends Base {
  view(){ const [vb,body]=ICONS[this.getAttribute('name')];
    return `<style>:host{display:block;flex:none}svg{display:block;width:100%;height:100%;overflow:visible;fill:currentColor}.cut{fill:#111822}text{font-family:Inter,sans-serif}</style><svg viewBox="${vb}">${body}</svg>`; }
});

/* A single-line label that spreads its letters over the width in its "w" attribute. */
customElements.define('ui-label', class extends Base {
  view(){ return '<style>:host{display:block;flex:none;white-space:pre}span{display:inline-block}</style><span><slot></slot></span>'; }
  connectedCallback(){ super.connectedCallback();
    const s=this.shadowRoot.querySelector('span'), w=+this.getAttribute('w');
    const n=this.textContent.length, nat=s.getBoundingClientRect().width;
    s.style.letterSpacing=((w-nat)/Math.max(1,n-1)).toFixed(3)+'px';
    this.style.width=w+'px';
  }
});
</script>
</body>
</html>
